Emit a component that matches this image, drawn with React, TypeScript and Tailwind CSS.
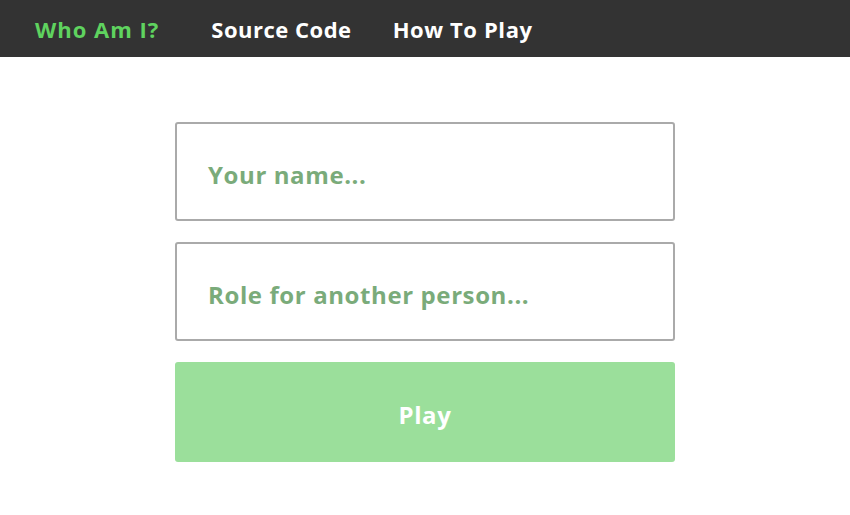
import React from "react";

export default function App() {
  return (
    <div className="min-h-[515px] bg-white" style={{ fontFamily: "'Open Sans', Lato, sans-serif" }}>
      <nav className="h-[57px] bg-[#333333] flex items-center pl-[35px] pt-[2px]">
        <a className="text-[22px] font-bold tracking-[1px] text-[#5fd35f]">Who Am I?</a>
        <a className="text-[22px] font-bold tracking-[0.5px] text-white ml-[52px]">Source Code</a>
        <a className="text-[22px] font-bold tracking-[0.6px] text-white ml-[41px]">How To Play</a>
      </nav>
      <div className="flex flex-col items-center pt-[65px] gap-[21px]">
        <div className="w-[500px] h-[99px] border-2 border-[#aaaaaa] rounded-[3px] flex items-center pl-[31px] pt-[6px]">
          <span className="text-[24px] font-bold tracking-[0.6px] text-[#7aab7a]">Your name...</span>
        </div>
        <div className="w-[500px] h-[99px] border-2 border-[#aaaaaa] rounded-[3px] flex items-center pl-[31px] pt-[6px]">
          <span className="text-[24px] font-bold tracking-[0.6px] text-[#7aab7a]">Role for another person...</span>
        </div>
        <button className="w-[500px] h-[100px] bg-[#9bdf9b] rounded-[3px] flex items-center justify-center pt-[5px] text-[24px] font-bold tracking-[0.6px] text-white">
          Play
        </button>
      </div>
    </div>
  );
}
